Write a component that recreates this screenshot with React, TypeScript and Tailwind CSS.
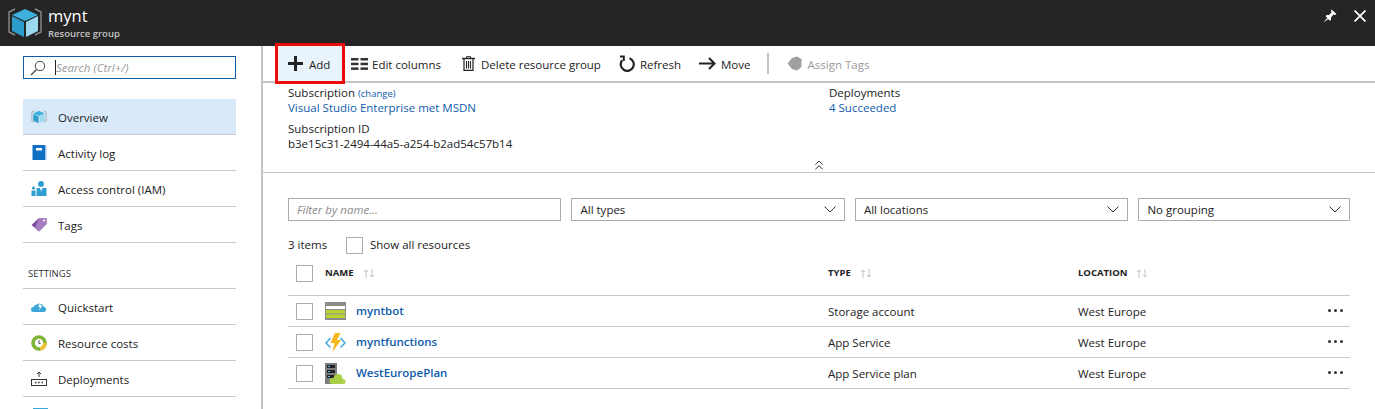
import React from "react";
import { ChevronsUp } from "lucide-react";

// Small inline icons from the portal blade
const CubeIcon = ({ size = 36 }: { size?: number }) => (
  <svg width={size} height={size} viewBox="0 0 36 36">
    <path d="M8 4 L2 7 V27 L8 30" fill="none" stroke="#8a8a8a" strokeWidth="1.4" />
    <path d="M28 4 L34 7 V27 L28 30" fill="none" stroke="#8a8a8a" strokeWidth="1.4" />
    <path d="M18 4 L31 10 L18 16 L5 10 Z" fill="#3fb0dc" />
    <path d="M5 11 L17 17 V32 L5 26 Z" fill="#2c9ccb" />
    <path d="M31 11 L19 17 V32 L31 26 Z" fill="#9ad8ee" />
  </svg>
);

const ActivityIcon = () => (
  <svg width="15" height="15" viewBox="0 0 15 15">
    <rect x="0.5" y="0" width="13" height="15" fill="#0f6fc0" />
    <rect x="13" y="0.5" width="1.5" height="14" fill="#9cc6e8" />
    <rect x="4" y="3" width="6" height="2.5" fill="#fff" />
  </svg>
);

const AccessIcon = () => (
  <svg width="16" height="15" viewBox="0 0 16 15">
    <circle cx="10" cy="3" r="3" fill="#2e9fd0" />
    <path d="M5.5 7 H15.5 V15 H5.5 Z" fill="#2e9fd0" />
    <path d="M9 7 L10 10.5 L11.5 7 Z" fill="#fff" />
    <circle cx="2.5" cy="7" r="1.6" fill="#2e9fd0" />
    <path d="M0.5 9.5 H4.5 V15 H0.5 Z" fill="#2e9fd0" />
  </svg>
);

const TagIcon = ({ color = "#7d4e9e", light = "#a77fc0" }: { color?: string; light?: string }) => (
  <svg width="16" height="15" viewBox="0 0 16 15">
    <path d="M0.5 8 L8 1 H15.5 V7 L8 14.5 Z" fill={color} />
    <path d="M8 1 H15.5 V7 L8 14.5 L4 11 Z" fill={light} />
    <circle cx="13" cy="3.5" r="1" fill="#fff" />
  </svg>
);

const GreyTagIcon = () => (
  <svg width="15" height="15" viewBox="0 0 15 15">
    <path d="M0.5 7.5 L5 2 L10 0.5 L14.5 3 V11 L10 14.5 L5 13 Z" fill="#a0a0a0" />
  </svg>
);

const CloudIcon = () => (
  <svg width="16" height="10" viewBox="0 0 16 10">
    <path d="M2.5 10 A2.5 2.5 0 0 1 2.5 5 A3.5 3.5 0 0 1 6 2.5 A4 4 0 0 1 12.5 4.5 A2.8 2.8 0 0 1 13 10 Z" fill="#3aa7d8" />
    <path d="M9.5 0 L7 5 H9 L8 8.5 L11.5 3.5 H9.5 Z" fill="#fff" />
  </svg>
);

const CostIcon = () => (
  <svg width="16" height="16" viewBox="0 0 16 16">
    <circle cx="8" cy="8" r="6" fill="#fff" stroke="#7fb539" strokeWidth="3.6" />
    <path d="M14 8 A6 6 0 0 1 9 14" fill="none" stroke="#f2c230" strokeWidth="3.6" />
    <path d="M8 5 V8.5 H9.5" fill="none" stroke="#555" strokeWidth="1" />
  </svg>
);

const DeployIcon = () => (
  <svg width="16" height="15" viewBox="0 0 16 15" fill="none" stroke="#333" strokeWidth="1">
    <path d="M8 6 V1 M6 3 L8 1 L10 3" />
    <rect x="0.5" y="8.5" width="15" height="6" />
    <path d="M4 11.5 H5.5 M7.2 11.5 H8.7 M10.5 11.5 H12" strokeWidth="1.4" />
  </svg>
);

const SearchGlass = () => (
  <svg width="16" height="16" viewBox="0 0 16 16" fill="none" stroke="#444" strokeWidth="1">
    <circle cx="10" cy="6" r="4.7" />
    <path d="M6.5 9.5 L1 15" strokeWidth="1.3" />
  </svg>
);

const PlusIcon = () => (
  <svg width="15" height="15" viewBox="0 0 15 15" fill="#222">
    <rect x="6" y="0" width="3" height="15" />
    <rect x="0" y="6" width="15" height="3" />
  </svg>
);

const ColumnsIcon = () => (
  <svg width="17" height="12" viewBox="0 0 17 12" fill="#333">
    <rect x="0" y="0" width="7.5" height="2.5" />
    <rect x="0" y="4.7" width="7.5" height="2.5" />
    <rect x="0" y="9.4" width="7.5" height="2.5" />
    <rect x="9.5" y="0" width="7.5" height="2.5" />
    <rect x="9.5" y="4.7" width="7.5" height="2.5" />
    <rect x="9.5" y="9.4" width="7.5" height="2.5" />
  </svg>
);

const TrashIcon = () => (
  <svg width="13" height="15" viewBox="0 0 13 15" fill="none" stroke="#222">
    <path d="M0 2.5 H13" strokeWidth="1.4" />
    <path d="M4.5 2 V0.7 H8.5 V2" strokeWidth="1" />
    <path d="M2 3 V14.4 H11 V3" strokeWidth="1.2" />
    <path d="M4.5 5 V12.5 M6.5 5 V12.5 M8.5 5 V12.5" strokeWidth="1.1" />
  </svg>
);

const RefreshIcon = () => (
  <svg width="16" height="17" viewBox="0 0 16 17" fill="none" stroke="#222" strokeWidth="2.2">
    <path d="M10.5 3.2 A6.5 6.5 0 1 1 3.2 5.2" />
    <path d="M1 1.5 H4.8 V6" strokeWidth="2" />
  </svg>
);

const MoveIcon = () => (
  <svg width="17" height="13" viewBox="0 0 17 13" fill="none" stroke="#222" strokeWidth="2">
    <path d="M0 6.5 H15" />
    <path d="M10 1 L15.5 6.5 L10 12" />
  </svg>
);

const SelectChevron = () => (
  <svg width="12" height="7" viewBox="0 0 12 7" fill="none" stroke="#333" strokeWidth="1">
    <path d="M0.5 0.5 L6 6 L11.5 0.5" />
  </svg>
);

const PinIcon = () => (
  <svg width="14" height="14" viewBox="0 0 14 14" fill="#fff">
    <path d="M8.5 0.5 L13.5 5 L12 6 L10.5 5.5 L8 8.5 L8 11 L6.5 11.5 L2.8 7.5 L3.5 6 L6 6 L8.5 3.2 L8 2 Z" />
    <path d="M4 9 L0.5 13.5 L5 10.2 Z" />
  </svg>
);

const CloseIcon = () => (
  <svg width="12" height="12" viewBox="0 0 12 12" stroke="#fff" strokeWidth="1.7">
    <path d="M0.5 0.5 L11.5 11.5 M11.5 0.5 L0.5 11.5" />
  </svg>
);

const StorageIcon = () => (
  <svg width="21" height="18" viewBox="0 0 21 18">
    <rect width="21" height="18" fill="#8c8c8c" />
    <rect x="1" y="4" width="19" height="3" fill="#fff" />
    <rect x="1" y="8" width="19" height="3.5" fill="#b8d432" />
    <rect x="1" y="12.5" width="19" height="3.5" fill="#b8d432" />
  </svg>
);

const FunctionIcon = () => (
  <svg width="21" height="19" viewBox="0 0 21 19">
    <path d="M5.5 5 L1 10 L5.5 14.5 M15.5 5 L20 10 L15.5 14.5" fill="none" stroke="#3aa7d8" strokeWidth="1.4" />
    <path d="M10 0 H15.5 L12 7 H16 L7.5 19 L9.5 10 H5.5 Z" fill="#f5b81c" />
  </svg>
);

const PlanIcon = () => (
  <svg width="21" height="21" viewBox="0 0 21 21">
    <rect width="12" height="21" fill="#7d7d7d" />
    <rect x="2" y="2" width="8" height="3" fill="#222" />
    <rect x="2" y="7" width="8" height="3" fill="#222" />
    <rect x="2" y="12" width="8" height="3" fill="#222" />
    <rect x="3" y="3" width="2" height="1" fill="#5cc0ea" />
    <rect x="3" y="8" width="2" height="1" fill="#5cc0ea" />
    <rect x="3" y="13" width="2" height="1" fill="#5cc0ea" />
    <g fill="#a8cf45">
      <circle cx="7.5" cy="18" r="3" />
      <circle cx="13" cy="15.5" r="4.5" />
      <circle cx="18" cy="18.5" r="2.5" />
      <rect x="7.5" y="17" width="10.5" height="4" />
    </g>
  </svg>
);

const SortArrows = () => (
  <svg width="12" height="9" viewBox="0 0 12 9" fill="none" stroke="#b5b5b5" strokeWidth="0.8">
    <path d="M3 9 V1 M1 3 L3 1 L5 3" />
    <path d="M9 0 V8 M7 6 L9 8 L11 6" />
  </svg>
);

const Checkbox = () => <div className="w-[17px] h-[17px] border border-[#ababab] bg-white shrink-0" />;

const NavItem = ({ icon, label, active }: { icon: React.ReactNode; label: string; active?: boolean }) => (
  <div className={`flex items-center h-[36px] border-b border-[#c8c8c8] ${active ? "bg-[#d8eafa]" : ""}`}>
    <div className="w-[35px] flex justify-center pl-[1px] pr-[4px]">{icon}</div>
    <span className="text-[11.5px] pt-[2px] text-[#222]">{label}</span>
  </div>
);

const ToolButton = ({ icon, label, muted, gap }: { icon: React.ReactNode; label: string; muted?: boolean; gap: string }) => (
  <div className={`flex items-center h-full text-[11.5px] ${gap} ${muted ? "text-[#9a9a9a]" : "text-[#222]"}`}>
    {icon}
    <span className="pt-[2px]">{label}</span>
  </div>
);

const SelectBox = ({ label, width }: { label: string; width: string }) => (
  <div className={`flex items-center justify-between h-[23px] border border-[#ababab] pl-[8px] pr-[8px] text-[11.5px] text-[#222] ${width}`}>
    <span className="pt-[1px]">{label}</span>
    <SelectChevron />
  </div>
);

const rows = [
  { name: "myntbot", type: "Storage account", icon: <StorageIcon /> },
  { name: "myntfunctions", type: "App Service", icon: <FunctionIcon /> },
  { name: "WestEuropePlan", type: "App Service plan", icon: <PlanIcon /> },
];

export default function App() {
  return (
    <div className="w-[1375px] h-[409px] overflow-hidden bg-white flex flex-col font-['Open_Sans',sans-serif]">
      {/* Blade header */}
      <div className="h-[46px] shrink-0 bg-[#252525] flex items-center pl-[7px] pr-[9px]">
        <CubeIcon />
        <div className="ml-[5px] mt-[1px]">
          <div className="text-[16.5px] leading-[20px] text-white">mynt</div>
          <div className="text-[9.5px] leading-[15px] font-semibold text-[#c4c4c4]">Resource group</div>
        </div>
        <div className="ml-auto flex items-center gap-[17px] self-start mt-[9px]">
          <PinIcon />
          <CloseIcon />
        </div>
      </div>

      <div className="flex flex-1 min-h-0">
        {/* Left menu */}
        <div className="w-[263px] shrink-0 border-r-2 border-[#c4c4c4] pl-[23px] pr-[25px] pt-[10px]">
          <div className="flex items-center h-[23px] border border-[#0f5cab] pl-[6px]">
            <SearchGlass />
            <div className="w-px h-[15px] bg-[#222] ml-[9px]" />
            <span className="text-[11.5px] pt-[1px] italic text-[#9a9a9a]">Search (Ctrl+/)</span>
          </div>
          <div className="mt-[20px]">
            <NavItem active icon={<CubeIcon size={16} />} label="Overview" />
            <NavItem icon={<ActivityIcon />} label="Activity log" />
            <NavItem icon={<AccessIcon />} label="Access control (IAM)" />
            <NavItem icon={<TagIcon />} label="Tags" />
          </div>
          <div className="h-[46px] flex items-end pb-[7px] pl-[5px] text-[9.5px] text-[#333] border-b border-[#c8c8c8]">
            SETTINGS
          </div>
          <NavItem icon={<CloudIcon />} label="Quickstart" />
          <NavItem icon={<CostIcon />} label="Resource costs" />
          <NavItem icon={<DeployIcon />} label="Deployments" />
          <div className="pl-[10px] pt-[11px]">
            <div className="w-[15px] h-[4px] bg-[#3aa7d8]" />
          </div>
        </div>

        {/* Main column */}
        <div className="flex-1 min-w-0">
          {/* Toolbar */}
          <div className="h-[37px] border-b-2 border-[#c4c4c4] flex items-center pl-[15px]">
            <div className="h-[35px] w-[64px] bg-[#e9f3fc] outline-[3px] outline-[#e80c0c] flex items-center gap-[6px] pl-[10px] text-[11.5px] text-[#222]">
              <PlusIcon />
              <span className="pt-[2px]">Add</span>
            </div>
            <div className="flex items-center h-full ml-[9px]">
              <ToolButton gap="gap-[4px]" icon={<ColumnsIcon />} label="Edit columns" />
              <div className="w-[21px]" />
              <ToolButton gap="gap-[6px]" icon={<TrashIcon />} label="Delete resource group" />
              <div className="w-[18px]" />
              <ToolButton gap="gap-[5px]" icon={<RefreshIcon />} label="Refresh" />
              <div className="w-[18px]" />
              <ToolButton gap="gap-[5px]" icon={<MoveIcon />} label="Move" />
            </div>
            <div className="w-[2px] h-[21px] bg-[#c4c4c4] ml-[16px] mr-[18px]" />
            <ToolButton muted gap="gap-[6px]" icon={<GreyTagIcon />} label="Assign Tags" />
          </div>

          {/* Essentials */}
          <div className="h-[90px] border-b border-[#c4c4c4] pt-[2px] text-[11.5px] leading-[15px] text-[#222]">
            <div className="flex pl-[25px]">
              <div className="w-[541px]">
                <div className="h-[15px]">
                  Subscription <span className="text-[9.5px] text-[#0f5cab]">(change)</span>
                </div>
                <div className="h-[15px] text-[#0f5cab]">Visual Studio Enterprise met MSDN</div>
                <div className="h-[15px] mt-[6px]">Subscription ID</div>
                <div className="h-[14px]">b3e15c31-2494-44a5-a254-b2ad54c57b14</div>
              </div>
              <div>
                <div>Deployments</div>
                <div className="text-[#0f5cab]">4 Succeeded</div>
              </div>
            </div>
            <div className="flex justify-center mt-[7px]">
              <ChevronsUp size={16} strokeWidth={1.5} color="#333" />
            </div>
          </div>

          {/* Resource list */}
          <div className="pl-[25px] pr-[25px] pt-[25px]">
            <div className="flex gap-[10px]">
              <div className="flex items-center h-[23px] w-[274px] border border-[#ababab] pl-[8px] text-[11.5px] italic text-[#8a8a8a]">
                <span className="pt-[1px]">Filter by name...</span>
              </div>
              <SelectBox label="All types" width="w-[274px]" />
              <SelectBox label="All locations" width="w-[274px]" />
              <SelectBox label="No grouping" width="w-[212px]" />
            </div>
            <div className="flex items-center h-[18px] mt-[15px] text-[11.5px] text-[#222]">
              <span className="w-[58px]">3 items</span>
              <Checkbox />
              <span className="ml-[7px]">Show all resources</span>
            </div>
            <div className="grid grid-cols-[532px_250px_1fr] items-start h-[31px] mt-[11px] border-b border-[#c8c8c8] pl-[8px] text-[9.5px] font-bold text-[#222]">
              <div className="flex items-center h-[17px]">
                <Checkbox />
                <span className="ml-[12px]">NAME</span>
                <span className="ml-[9px]"><SortArrows /></span>
              </div>
              <div className="flex items-center gap-[9px] h-[17px]">TYPE <SortArrows /></div>
              <div className="flex items-center gap-[9px] h-[17px]">LOCATION <SortArrows /></div>
            </div>
            {rows.map((row) => (
              <div key={row.name} className="grid grid-cols-[532px_250px_1fr_auto] items-center h-[31px] border-b border-[#c8c8c8] pl-[8px] pr-[7px] text-[11.5px] text-[#222]">
                <div className="flex items-center">
                  <Checkbox />
                  <div className="w-[21px] ml-[12px] flex justify-center">{row.icon}</div>
                  <span className="ml-[10px] font-semibold text-[#0f5cab]">{row.name}</span>
                </div>
                <div className="pt-[1px]">{row.type}</div>
                <div className="pt-[1px]">West Europe</div>
                <div className="flex gap-[3px] -mt-[2px]">
                  <div className="w-[3px] h-[3px] rounded-full bg-[#333]" />
                  <div className="w-[3px] h-[3px] rounded-full bg-[#333]" />
                  <div className="w-[3px] h-[3px] rounded-full bg-[#333]" />
                </div>
              </div>
            ))}
          </div>
        </div>
      </div>
    </div>
  );
}
